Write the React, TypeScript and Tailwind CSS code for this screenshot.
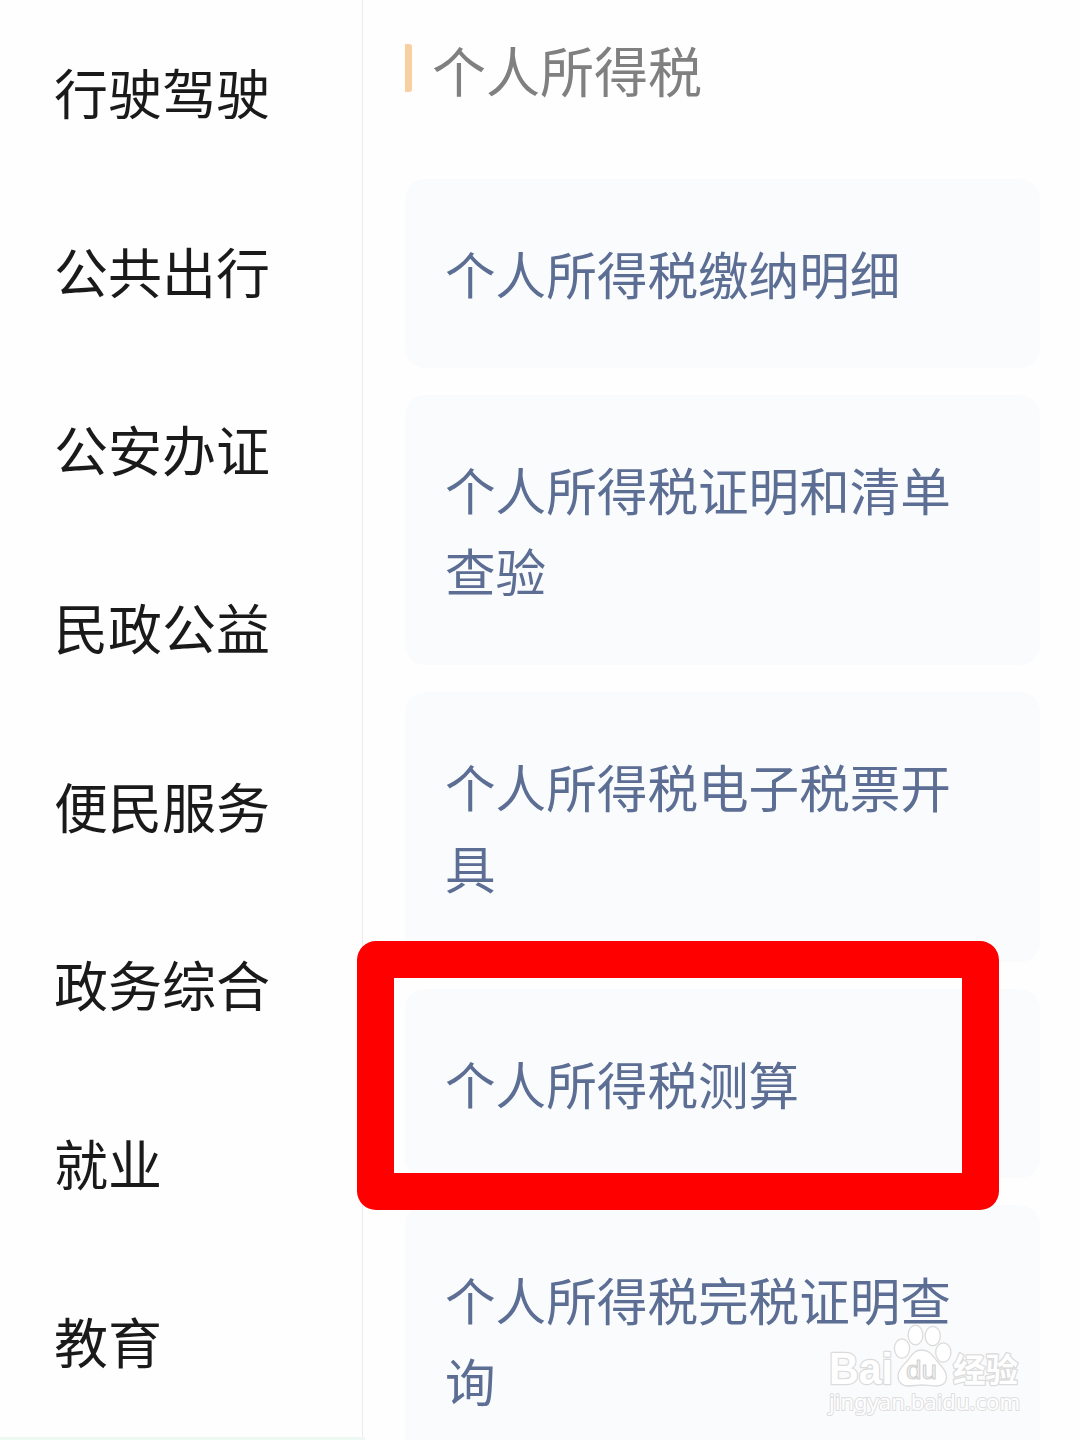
const categories = ["行驶驾驶", "公共出行", "公安办证", "民政公益", "便民服务", "政务综合", "就业", "教育"]

const services = [
  { id: "detail", label: "个人所得税缴纳明细" },
  { id: "verify", label: "个人所得税证明和清单查验" },
  { id: "invoice", label: "个人所得税电子税票开具" },
  { id: "estimate", label: "个人所得税测算", highlighted: true },
  { id: "certificate", label: "个人所得税完税证明查询" },
]

function Sidebar() {
  return (
    <aside className="flex w-[363px] shrink-0 flex-col border-r border-[#ebebeb]">
      <nav className="flex h-[1437px] shrink-0 flex-col overflow-hidden pt-[3px]">
        {categories.map((name) => (
          <a
            key={name}
            className="flex h-[178.4px] shrink-0 items-center pl-[54px] text-[54px] leading-none text-[#1a1a1a]"
          >
            {name}
          </a>
        ))}
      </nav>
      <div className="h-[3px] w-[365px] bg-[#eef9f4]" />
    </aside>
  )
}

function Watermark() {
  return (
    <svg
      className="absolute top-[1318px] left-[820px]"
      width="210"
      height="104"
      viewBox="0 0 210 104"
      fill="#fff"
      stroke="#dcdcdc"
      strokeWidth="1.3"
      strokeLinejoin="round"
      fontFamily='"Liberation Sans", "Noto Sans CJK SC", sans-serif'
    >
      <g paintOrder="stroke" strokeWidth="2.6" fontWeight="700">
        <text x="9" y="66" fontSize="44" textLength="64" lengthAdjust="spacingAndGlyphs">
          Bai
        </text>
        <text x="133" y="64" fontSize="33" textLength="65" lengthAdjust="spacingAndGlyphs">
          经验
        </text>
      </g>
      <ellipse cx="82" cy="30.5" rx="7.6" ry="9.6" />
      <ellipse cx="95.5" cy="17" rx="7.4" ry="9.8" />
      <ellipse cx="112.7" cy="18" rx="7.6" ry="9.6" />
      <ellipse cx="123.3" cy="34.5" rx="7.6" ry="9.6" />
      <path d="M102 32C110 32 113 38 117 43S126.500 52 126.500 59C126.500 65 122 68 117 68C111 68 107 67 102 67S93 68 88 68C82 68 78 64 78 58C78 51 84 47 88 42S94 32 102 32Z" />
      <text
        x="86"
        y="61"
        fontSize="26"
        textLength="31"
        lengthAdjust="spacingAndGlyphs"
        fill="#f3f3f3"
        stroke="#d0d0d0"
        strokeWidth="1"
      >
        du
      </text>
      <text
        x="9"
        y="92"
        fontSize="22"
        textLength="191"
        lengthAdjust="spacingAndGlyphs"
        fontFamily='"Noto Sans", sans-serif'
        paintOrder="stroke"
        stroke="#dedede"
        strokeWidth="2"
      >
        jingyan.baidu.com
      </text>
    </svg>
  )
}

export default function App() {
  return (
    <div
      lang="zh-CN"
      className="relative flex h-[1440px] w-[1080px] overflow-hidden bg-[#fefefe] font-['Noto_Sans_CJK_SC',sans-serif]"
    >
      <Sidebar />
      <main className="flex w-[677px] shrink-0 flex-col pl-[42px]">
        <header className="flex h-[179px] shrink-0 items-start">
          <span className="mt-11 h-12 w-[7px] rounded-r-[3px] rounded-l-[1px] bg-[#f8cfa0]" />
          <h1 className="mt-[43px] ml-5 text-[54px] leading-[54px] text-[#808080]">个人所得税</h1>
        </header>
        <ul className="flex flex-col gap-[27px]">
          {services.map((item) => (
            <li
              key={item.id}
              className="relative shrink-0 rounded-[20px] bg-[#fafbfd] py-[54px] pr-[60px] pl-10 text-[50.6px] leading-[81px] text-[#5c6e93]"
            >
              {item.label}
              {item.highlighted && (
                <span className="absolute -top-12 -left-12 z-10 h-[269px] w-[642px] rounded-[19px] border-[37px] border-[#ff0000]" />
              )}
            </li>
          ))}
        </ul>
      </main>
      <Watermark />
    </div>
  )
}
